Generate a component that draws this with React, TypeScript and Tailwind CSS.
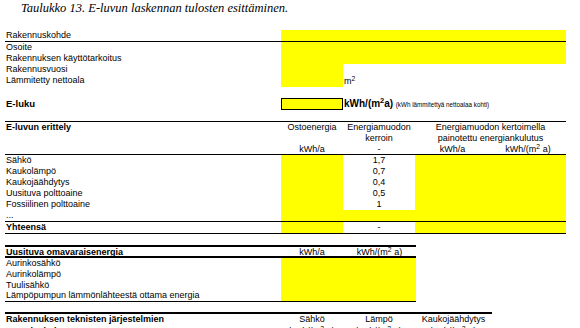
import React from "react";

const Y = "bg-[#ffff00]";

function Row({
  label,
  bold,
  cells,
  h = "h-[11px]",
  cols = "grid-cols-[276px_62px_72px_75px_76px]",
  className = "",
}: {
  label?: React.ReactNode;
  bold?: boolean;
  cells: React.ReactNode[];
  h?: string;
  cols?: string;
  className?: string;
}) {
  return (
    <div className={`grid ${cols} ${h} leading-[11px] ${className}`}>
      <div className={`pl-[1px] whitespace-nowrap ${bold ? "font-bold" : ""}`}>{label}</div>
      {cells}
    </div>
  );
}

const C = (cls: string, content?: React.ReactNode, key?: string | number) => (
  <div key={key} className={`${cls} text-center whitespace-nowrap`}>
    {content}
  </div>
);

export default function App() {
  const energy = [
    ["Sähkö", "1,7"],
    ["Kaukolämpö", "0,7"],
    ["Kaukojäähdytys", "0,4"],
    ["Uusituva polttoaine", "0,5"],
    ["Fossiilinen polttoaine", "1"],
  ];
  const renew = ["Aurinkosähkö", "Aurinkolämpö", "Tuulisähkö", "Lämpöpumpun lämmönlähteestä ottama energia"];
  const renewH = ["h-[11px]", "h-[11px]", "h-[10px]", "h-[11px]"];
  return (
    <div className="w-[580px] h-[328px] overflow-hidden bg-white text-black font-['Liberation_Sans',Arial,sans-serif] text-[9px]">
      <div className="pl-[21px] pt-[1px] h-[30px] font-['Liberation_Serif','Times_New_Roman',serif] italic text-[12.5px] leading-[14px]">
        Taulukko 13. E-luvun laskennan tulosten esittäminen.
      </div>

      <div className="ml-[5px] w-[561px]">
        <Row
          label="Rakennuskohde"
          className="border-b border-black h-[12px]"
          h="h-[12px]"
          cells={[<div key="a" className={`${Y} col-span-4`} />]}
        />
        <Row label="Osoite" cells={[<div key="a" className={`${Y} col-span-4`} />]} />
        <Row label="Rakennuksen käyttötarkoitus" cells={[<div key="a" className={`${Y} col-span-4`} />]} />
        <Row label="Rakennusvuosi" cells={[C(Y, null, 1)]} />
        <Row
          label="Lämmitetty nettoala"
          h="h-[12px]"
          cells={[
            C(Y, null, 1),
            <div key="m" className="pl-[1px] pt-[1px]">
              m<sup>2</sup>
            </div>,
          ]}
        />
        <div className="h-[11px]" />
        <Row
          label={<span className="text-[9.5px]">E-luku</span>}
          bold
          h="h-[12px]"
          cells={[
            <div key="b" className={`${Y} border border-black`} />,
            <div key="t" className="col-span-3 pl-[1px] whitespace-nowrap">
              <span className="font-bold text-[10px]">
                kWh/(m<sup>2</sup>a)
              </span>{" "}
              <span className="text-[6.3px]">(kWh lämmitettyä nettoalaa kohti)</span>
            </div>,
          ]}
        />
        <div className="h-[11px]" />

        <div className="border-t border-b border-black">
          <Row
            label="E-luvun erittely"
            bold
            cells={[
              C("", "Ostoenergia", 1),
              C("", "Energiamuodon", 2),
              <div key="3" className="col-span-2 text-center whitespace-nowrap">
                Energiamuodon kertoimella
              </div>,
            ]}
          />
          <Row
            cells={[
              C("", null, 1),
              C("", "kerroin", 2),
              <div key="3" className="col-span-2 text-center whitespace-nowrap">
                painotettu energiankulutus
              </div>,
            ]}
          />
          <Row
            h="h-[10px]"
            cells={[
              C("", "kWh/a", 1),
              C("", "-", 2),
              C("", "kWh/a", 3),
              C(
                "",
                <>
                  kWh/(m<sup>2</sup> a)
                </>,
                4
              ),
            ]}
          />
        </div>
        {energy.map(([l, k]) => (
          <Row key={l} label={l} cells={[C(Y, null, 1), C("", k, 2), C(Y, null, 3), C(Y, null, 4)]} />
        ))}
        <Row label="..." cells={[C(Y, null, 1), C(Y, null, 2), C(Y, null, 3), C(Y, null, 4)]} />
        <div className="border-t border-b border-black">
          <Row
            label="Yhteensä"
            bold
            cells={[C(Y, null, 1), C("", "-", 2), <div key="3" className={`${Y} col-span-2`} />]}
          />
        </div>
      </div>

      <div className="h-[11px]" />

      <div className="ml-[5px] w-[411px]">
        <div className="border-t-2 border-b-2 border-black">
          <Row
            label="Uusituva omavaraisenergia"
            bold
            h="h-[9px] leading-[10px]"
            cols="grid-cols-[276px_62px_73px]"
            cells={[
              C("", "kWh/a", 1),
              C(
                "",
                <>
                  kWh/(m<sup>2</sup> a)
                </>,
                2
              ),
            ]}
          />
        </div>
        <div className="border-b border-black">
          {renew.map((l, i) => (
            <Row
              key={l}
              label={l}
              h={renewH[i]}
              cols="grid-cols-[276px_62px_73px]"
              cells={[<div key="y" className={`${Y} col-span-2`} />]}
            />
          ))}
        </div>
      </div>

      <div className="h-[10px]" />

      <div className="ml-[5px] w-[487px]">
        <div className="border-t-2 border-black">
          <Row
            label="Rakennuksen teknisten järjestelmien"
            bold
            h="h-[12px]"
            cols="grid-cols-[276px_62px_72px_77px]"
            cells={[C("", "Sähkö", 1), C("", "Lämpö", 2), C("", "Kaukojäähdytys", 3)]}
          />
          <Row
            label="energiankulutus"
            bold
            cols="grid-cols-[276px_62px_72px_77px]"
            cells={[1, 2, 3].map((i) =>
              C(
                "",
                <>
                  kWh/(m<sup>2</sup> a)
                </>,
                i
              )
            )}
          />
        </div>
      </div>
    </div>
  );
}
